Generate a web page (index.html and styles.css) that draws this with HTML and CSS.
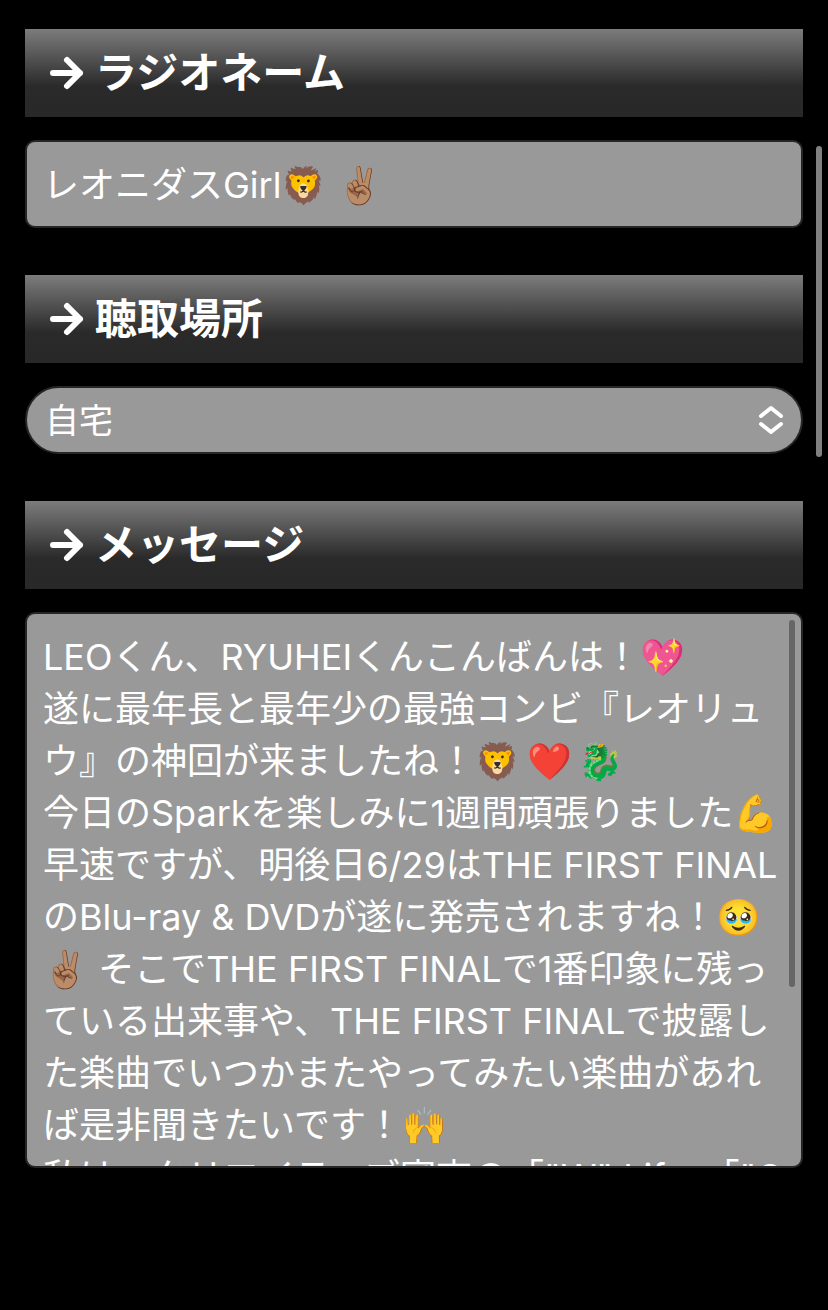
FILE: index.html
```
<!DOCTYPE html>
<html lang="ja">
<head>
    <meta charset="UTF-8">
    <meta name="viewport" content="width=device-width, initial-scale=1.0">
    <title>メッセージフォーム</title>
    <link rel="stylesheet" href="styles.css">
</head>
<body>
    <form class="form">
        <div class="field">
            <label class="heading" for="radio-name">
                <svg class="arrow" viewBox="0 0 36 36" aria-hidden="true"><path d="M4 18H31M18 5L31 18L18 31"/></svg>
                ラジオネーム
            </label>
            <input class="control text" type="text" id="radio-name" value="レオニダスGirl🦁 ✌🏽">
        </div>

        <div class="field">
            <label class="heading" for="place">
                <svg class="arrow" viewBox="0 0 36 36" aria-hidden="true"><path d="M4 18H31M18 5L31 18L18 31"/></svg>
                聴取場所
            </label>
            <div class="control-wrap">
                <select class="control select" id="place">
                    <option selected>自宅</option>
                </select>
                <svg class="chevrons" viewBox="0 0 26 30" aria-hidden="true"><path d="M3 11L13 3L23 11M3 19L13 27L23 19"/></svg>
            </div>
        </div>

        <div class="field">
            <label class="heading" for="message">
                <svg class="arrow" viewBox="0 0 36 36" aria-hidden="true"><path d="M4 18H31M18 5L31 18L18 31"/></svg>
                メッセージ
            </label>
            <div class="control-wrap">
                <textarea class="control message" id="message" wrap="off">LEOくん、RYUHEIくんこんばんは！💖
遂に最年長と最年少の最強コンビ『レオリュ
ウ』の神回が来ましたね！🦁&thinsp;❤️&thinsp;🐉
今日のSparkを楽しみに1週間頑張りました💪
早速ですが、明後日6/29はTHE FIRST FINAL
のBlu-ray &amp; DVDが遂に発売されますね！🥹
✌🏽 そこでTHE FIRST FINALで1番印象に残っ
ている出来事や、THE FIRST FINALで披露し
た楽曲でいつかまたやってみたい楽曲があれ
ば是非聞きたいです！🙌
私は、クリエイティブ審査の「"W" Life」「"O</textarea>
                <span class="message-scroll"></span>
            </div>
        </div>
    </form>
    <div class="page-scroll"></div>
</body>
</html>
```
FILE: styles.css
```
* {
    box-sizing: border-box;
}

body {
    margin: 0;
    min-height: 100vh;
    background: #000;
    color: #fff;
    font-family: Inter, "Noto Sans CJK JP", sans-serif;
}

.form {
    display: flex;
    flex-direction: column;
    gap: 47px;
    padding: 29px 25px;
}

.field {
    display: flex;
    flex-direction: column;
    gap: 23px;
}

/* 見出し */
.heading {
    display: flex;
    align-items: center;
    gap: 10px;
    height: 88px;
    padding: 0 24px;
    background: linear-gradient(#7c7c7c 0%, #2a2a2a 65%, #282828 100%);
    font-size: 42px;
    font-weight: 700;
    line-height: 88px;
}

.arrow {
    width: 36px;
    height: 36px;
    fill: none;
    stroke: #fff;
    stroke-width: 6;
    stroke-linecap: round;
    stroke-linejoin: round;
}

/* 入力欄 */
.control-wrap {
    position: relative;
    display: flex;
}

.control {
    display: block;
    width: 100%;
    margin: 0;
    border: 2px solid #262626;
    border-radius: 10px;
    outline: none;
    background: #999;
    color: #fff;
    font-family: inherit;
    font-size: 36px;
    font-weight: 400;
}

.text {
    height: 88px;
    padding: 0 16px 4px;
}

.select {
    height: 68px;
    padding: 0 18px;
    border-radius: 34px;
    font-size: 34px;
    appearance: none;
}

.chevrons {
    position: absolute;
    top: 19px;
    right: 19px;
    width: 26px;
    height: 30px;
    fill: none;
    stroke: #fff;
    stroke-width: 4;
    stroke-linecap: round;
    stroke-linejoin: round;
    pointer-events: none;
}

.message {
    height: 556px;
    padding: 17px 16px;
    line-height: 52px;
    overflow: hidden;
    resize: none;
}

/* スクロールバー */
.message-scroll {
    position: absolute;
    top: 8px;
    right: 8px;
    width: 6px;
    height: 367px;
    border-radius: 3px;
    background: #666;
}

.page-scroll {
    position: fixed;
    top: 146px;
    right: 6px;
    width: 6px;
    height: 311px;
    border-radius: 3px;
    background: #808080;
}
```
